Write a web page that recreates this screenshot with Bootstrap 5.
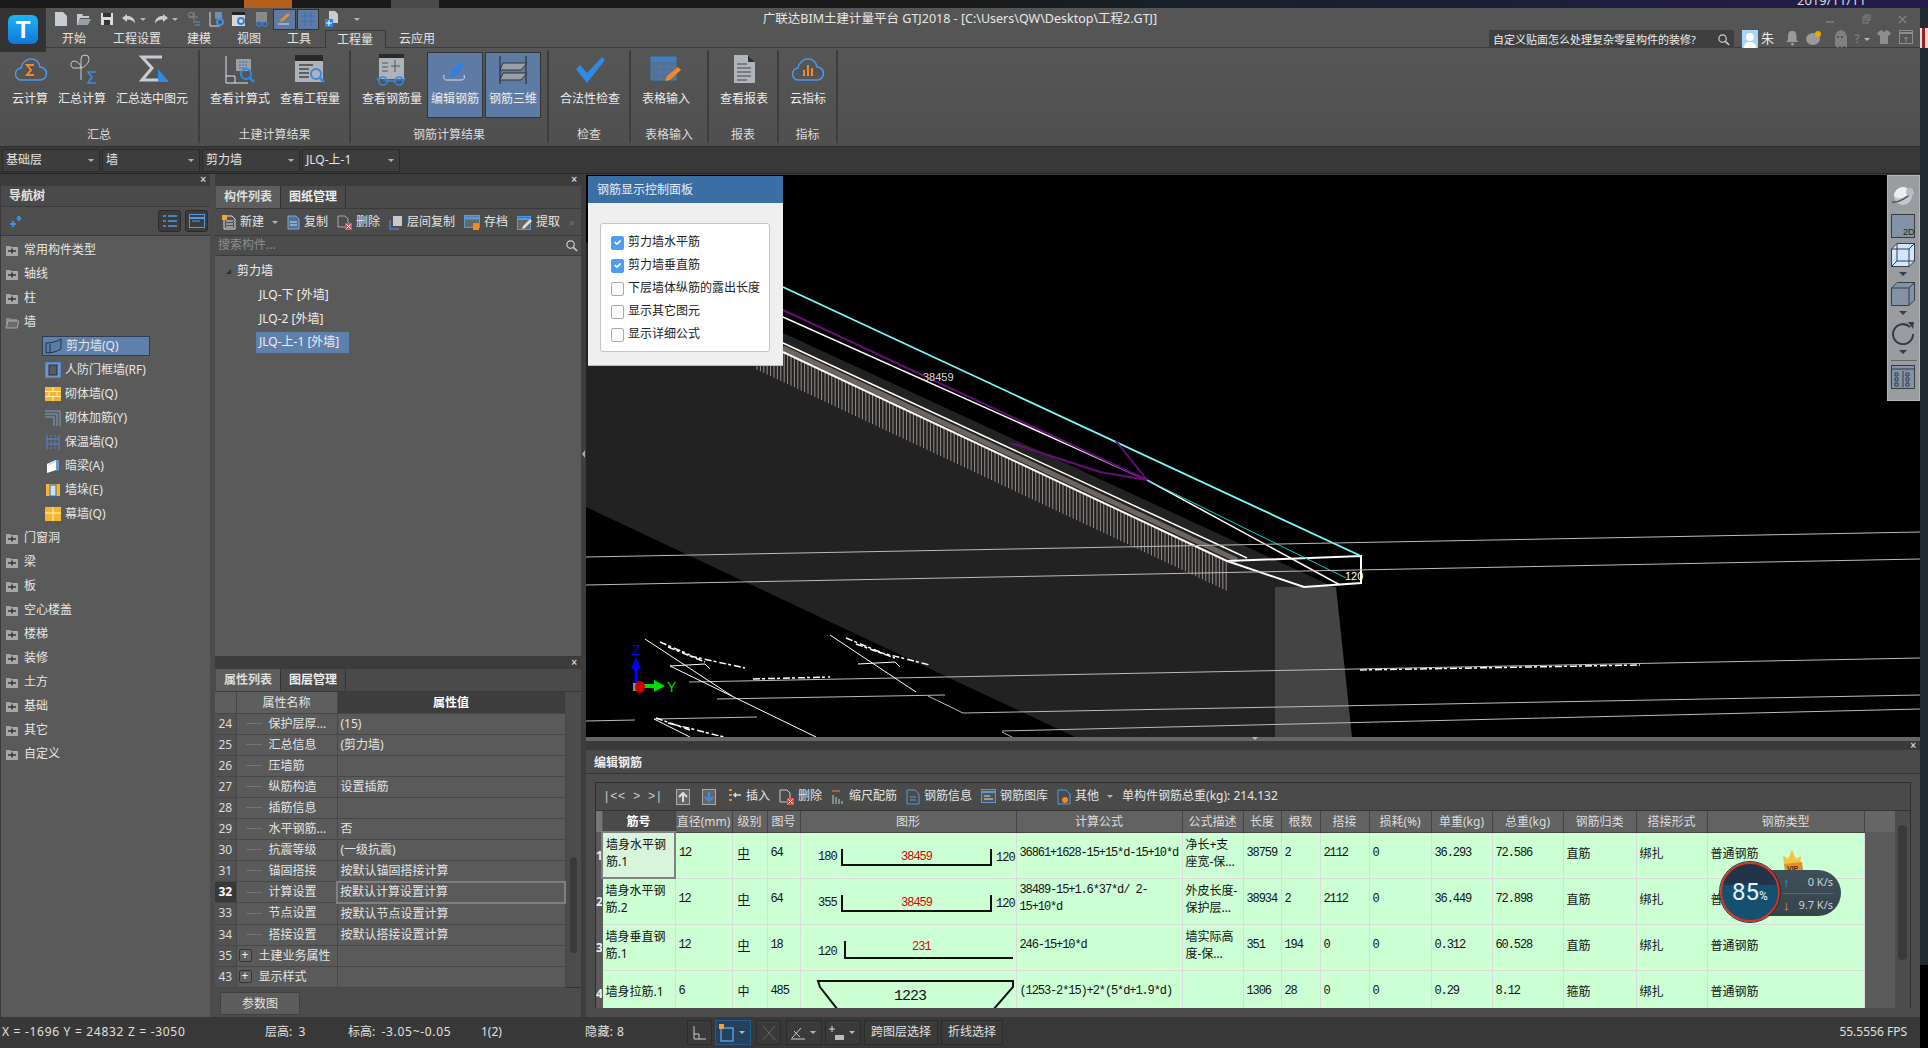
<!DOCTYPE html>
<html lang="zh-CN">
<head>
    <meta charset="UTF-8">
    <title>广联达BIM土建计量平台 GTJ2018</title>
    <link rel="stylesheet" href="https://cdn.jsdelivr.net/npm/bootstrap@5.3.0/dist/css/bootstrap.min.css">
    <style>
        html, body { height: 100%; }
        body { background: #1e2630; color: #e4e4e4; font: 12px/1.2 "Noto Sans", "Noto Sans CJK SC", sans-serif; overflow: hidden; width: 1928px; height: 1048px; }
        svg { display: block; flex: none; }

        /* desktop behind the window */
        .desk-top { height: 8px; background: linear-gradient(90deg, #1a1a1a 0, #1a1a1a 50%, #162028 60%, #251c4c 100%); position: relative; overflow: hidden; }
        .desk-seg1 { width: 48px; margin-left: 244px; background: #b5601c; }
        .desk-seg2 { width: 48px; margin-left: 99px; background: #4a4a4a; }
        .desk-clock { position: absolute; left: 1797px; top: -7px; font-size: 13px; color: #ddd; }
        .app-wrap { width: 1920px; height: 1040px; }
        .side-strip { width: 8px; height: 1040px; background: linear-gradient(#1f2a33 0, #1f2a33 92%, #000 92%); padding-top: 20px; }
        .side-pic { height: 20px; background: linear-gradient(90deg, #ddd 0, #ddd 30%, #a02020 30%, #a02020 60%, #ddd 60%); }

        /* title + tabs */
        .title-area { height: 40px; background: #555; border-bottom: 1px solid #3c3c3c; position: relative; }
        .logo-box { width: 46px; height: 44px; background: #333; position: absolute; left: 0; top: 0; z-index: 3; padding: 7px 0 0 8px; }
        .logo-t { width: 30px; height: 29px; border-radius: 6px; background: linear-gradient(#1fb4f5, #0d78dc); color: #fff; font: 700 24px/29px "Liberation Sans", sans-serif; text-align: center; }
        .row-top { height: 22px; }
        .qat { width: 360px; padding-left: 50px; }
        .qat-i { width: 23px; height: 22px; }
        .qat-on { background: #5e7ba6; width: 23px; height: 21px; border: 1px solid #333; margin-right: 1px; }
        .qat-c { width: 9px; }
        .qat-c2 { width: 11px; }
        .qat-end { margin-left: 11px; }
        .win-title { color: #e8e8e8; padding-top: 3px; font-size: 12.5px; }
        .win-btns { width: 360px; gap: 27px; padding: 0 13px 0 0; }
        .row-tabs { height: 18px; padding-left: 46px; }
        .rb-tab { padding: 0 13px; height: 18px; line-height: 17px; color: #e4e4e4; font-size: 12px; white-space: nowrap; }
        .rb-tab-first { padding-left: 16px; padding-right: 0; width: 54px; }
        .rb-tab-on { background: #555; border: 1px solid #3a3a3a; border-bottom: 0; width: 61px; padding: 0 11px; margin-left: 1px; }
        .q-box { width: 245px; height: 18px; background: #3f3f3f; padding: 0 4px; font-size: 11px; color: #eee; line-height: 19px; white-space: nowrap; overflow: hidden; }
        .tabs-right { margin-left: auto; padding-right: 3px; }
        .user-name { width: 23px; padding-left: 3px; color: #eee; font-size: 13px; }
        .tr-i { width: 22px; height: 18px; }

        /* ribbon */
        .ribbon { height: 99px; background: linear-gradient(#565656, #4f4f4f); border-bottom: 1px solid #2e2e2e; }
        .rb-group { height: 93px; margin-top: 2px; border-right: 2px solid #3d3d3d; position: relative; }
        .rb-g1 { width: 200px; padding-left: 7px; }
        .rb-g2 { width: 151px; padding-left: 5px; }
        .rb-g3 { width: 198px; padding-left: 6px; }
        .rb-g4 { width: 82px; padding-left: 6px; }
        .rb-g5 { width: 78px; padding-left: 6px; }
        .rb-g6 { width: 70px; padding-left: 6px; }
        .rb-g7 { width: 59px; padding-left: 6px; }
        .rb-btn { height: 66px; padding: 4px 5px 0; font-size: 12px; color: #ececec; white-space: nowrap; text-align: center; }
        .rb-btn svg { margin: 0 auto 6px; }
        .rb-btn-on { background: #5e7ba6; border: 1px solid #333; width: 56px; padding: 1px 3px 0; margin: 2px 2px 0 0; }
        .rb-grp-name { position: absolute; left: 0; right: 0; bottom: 1px; text-align: center; font-size: 12px; color: #dcdcdc; }

        .pick-bar { height: 27px; background: #383838; border-bottom: 1px solid #262626; padding: 2px 0 0 2px; gap: 2px; }
        .pick-box { width: 98px; height: 23px; background: #3d3d3d; border: 1px solid #2b2b2b; padding: 0 5px 0 3px; font-size: 12px; color: #e4e4e4; }
        .caret-s { width: 0; height: 0; border-left: 3px solid transparent; border-right: 3px solid transparent; border-top: 3px solid #b5b5b5; flex: none; }

        /* panels */
        .work-area { height: 843px; }
        .pane-left { width: 210px; background: #5a5a5a; border-left: 1px solid #3a3a3a; }
        .pane-strip { height: 12px; background: #3c3c3c; color: #ccc; font: 700 10px/12px "Liberation Sans", sans-serif; text-align: right; padding-right: 4px; }
        .nav-head { height: 21px; background: #4a4a4a; border-bottom: 1px solid #3a3a3a; padding: 3px 8px; font-weight: 700; font-size: 12px; }
        .nav-tools { height: 29px; background: #4d4d4d; border-bottom: 1px solid #3a3a3a; padding: 3px 2px 3px 8px; gap: 4px; }
        .nav-tbtn { width: 23px; height: 22px; background: #3c3c3c; border: 1px solid #2b2b2b; border-radius: 3px; }
        .nav-tree { padding-top: 2px; }
        .nav-row { height: 24px; padding-left: 4px; gap: 5px; font-size: 12px; color: #e6e6e6; }
        .nav-sub { padding-left: 44px; gap: 4px; }
        .nav-sel { background: #6080ac; border: 1px solid #2e3b52; height: 20px; margin: 2px 60px 2px 41px; padding-left: 2px; }
        .pane-gap { width: 5px; background: #4b4b4b; }
        .pane-mid { width: 366px; background: #5a5a5a; }
        .pane-gap2 { width: 5px; background: #3d3d3d; position: relative; }
        .gap-arrow { position: absolute; left: 1px; top: 276px; width: 0; height: 0; border-top: 4px solid transparent; border-bottom: 4px solid transparent; border-right: 3px solid #aaa; }

        .pane-tabs { height: 23px; background: #4a4a4a; padding-left: 1px; border-bottom: 1px solid #3a3a3a; }
        .pane-tab { width: 65px; text-align: center; line-height: 22px; font-size: 12px; font-weight: 700; color: #eee; border-right: 1px solid #333; }
        .pane-tab-on { background: #5e5e5e; color: #ddd; }
        .comp-tools { height: 27px; background: #4c4c4c; padding-left: 7px; border-bottom: 1px solid #3a3a3a; font-size: 12px; }
        .ct-item { gap: 4px; margin-right: 9px; white-space: nowrap; }
        .comp-search { height: 20px; background: #4c4c4c; border-bottom: 1px solid #3a3a3a; color: #8d8d8d; padding: 0 3px; margin-bottom: 1px; }
        .comp-list { height: 400px; background: #5a5a5a; padding-top: 2px; border-bottom: 1px solid #3a3a3a; }
        .cl-row { height: 24px; padding-left: 44px; font-size: 12px; color: #eee; }
        .cl-root { padding-left: 11px; gap: 6px; }
        .cl-sel { background: #6080ac; width: 93px; height: 21px; margin: 1px 0 2px 41px; padding-left: 3px; white-space: nowrap; }
        .cl-tri { width: 0; height: 0; border-left: 5px solid transparent; border-bottom: 5px solid #2e2e2e; }

        .prop-pane { height: 359px; background: #4c4c4c; }
        .prop-wrap { height: 295px; }
        .prop-scroll { width: 16px; background: #4c4c4c; padding: 165px 4px 0 4px; }
        .scroll-thumb { background: #3a3a3a; border-radius: 4px; height: 96px; }
        .table.prop-tbl { table-layout: fixed; width: 350px; margin: 0; border-color: #454545; }
        .table.prop-tbl > * > tr > * { background-color: #5a5a5a; color: #e4e4e4; padding: 0; height: 21px; line-height: 20px; font-size: 12px; border: 1px solid #474747; border-width: 0 1px 1px 0; white-space: nowrap; overflow: hidden; box-shadow: none; font-weight: 400; }
        .table.prop-tbl > thead > tr > th { text-align: center; background-color: #5e5e5e; }
        .table.prop-tbl > thead > tr > th.prop-hv { background-color: #3d3d3d; font-weight: 700; color: #fff; }
        .table.prop-tbl > tbody > tr > td.prop-no { background-color: #525252; text-align: center; color: #ddd; }
        .table.prop-tbl > tbody > tr > td.prop-no-on { background-color: #383838; font-weight: 700; color: #fff; }
        .table.prop-tbl > tbody > tr > td.prop-v { padding-left: 3px; }
        .table.prop-tbl > tbody > tr > td.prop-focus { border: 2px solid #808080; padding-left: 2px; line-height: 17px; }
        .prop-name { padding-left: 9px; gap: 7px; height: 20px; }
        .tree-tick { width: 16px; height: 1px; background: #757575; flex: none; }
        .plus-box { width: 13px; height: 13px; border: 1px solid #333; border-radius: 2px; background: #626262; text-align: center; line-height: 10px; font-size: 12px; color: #eee; flex: none; margin-left: 2px; }
        .prop-foot { height: 29px; padding: 4px 0 0 5px; border-top: 1px solid #333; }
        .param-btn { width: 80px; height: 23px; background: #5c5c5c; border: 1px solid #404040; color: #e4e4e4; text-align: center; line-height: 21px; font-size: 12px; }

        /* 3D canvas */
        .pane-right { width: 1334px; background: #3d3d3d; position: relative; }
        .scene-box { height: 562px; background: #000; position: relative; overflow: hidden; margin-top: 1px; }
        .scene-svg { position: absolute; left: 0; top: 0; }
        .ctl-panel { position: absolute; left: 2px; top: 1px; width: 195px; height: 190px; background: #efefef; z-index: 2; border-bottom: 1px solid #bbb; }
        .ctl-head { height: 27px; background: #3a6ea5; color: #e8eef6; padding: 0 9px; line-height: 27px; font-size: 12px; }
        .ctl-inner { margin: 20px 13px 0 12px; height: 129px; background: #fff; border: 1px solid #c4c4c4; border-radius: 3px; padding: 7px 10px 0; color: #222; }
        .ctl-row { height: 23px; gap: 4px; font-size: 12px; white-space: nowrap; }
        .form-check-input.ctl-chk { width: 13px; height: 14px; margin: 0; border-radius: 2px; border-color: #aaa; flex: none; }
        .form-check-input.ctl-chk:checked { background-color: #4d9df5; border-color: #4d9df5; }
        .view-bar { position: absolute; right: 0; top: 0; width: 33px; height: 226px; background: #9a9ca0; border: 1px solid #b5b5b5; z-index: 2; padding: 9px 0 0 3px; }
        .view-bar svg { margin-bottom: 5px; }
        .view-bar svg.vb-first { margin-bottom: 7px; }
        .vb-tri { width: 0; height: 0; border-left: 4px solid transparent; border-right: 4px solid transparent; border-top: 4px solid #333c48; margin: 0 0 6px 8px; }
        .vb-line { height: 1px; background: #666; width: 26px; margin: 0 0 4px; }
        .scene-sash { height: 4px; background: #666; position: relative; }
        .sash-tri { position: absolute; left: 666px; top: 0; width: 0; height: 0; border-left: 3px solid transparent; border-right: 3px solid transparent; border-top: 3px solid #bbb; }

        /* editor */
        .edit-strip { height: 9px; background: #3a3a3a; color: #ccc; font: 700 10px/9px "Liberation Sans", sans-serif; text-align: right; padding-right: 4px; }
        .edit-head { height: 24px; background: #4a4a4a; border-bottom: 1px solid #353535; padding: 6px 8px 0; font-weight: 700; color: #eee; }
        .edit-body { height: 243px; background: #4c4c4c; padding: 8px 9px 9px; position: relative; }
        .edit-box { height: 226px; border: 1px solid #2e2e2e; background: #4c4c4c; }
        .edit-tools { height: 28px; padding-left: 7px; border-bottom: 1px solid #333; background: #4a4a4a; font-size: 12px; white-space: nowrap; }
        .et-nav { width: 15px; font: 12px "Liberation Mono", monospace; color: #ccc; }
        .et-nav-end { margin-right: 13px; }
        .et-arrow { margin-right: 12px; }
        .et-item { gap: 4px; margin-right: 9px; }
        .grid-row { height: 197px; overflow: hidden; }
        .grid-clip { width: 1300px; height: 197px; overflow: hidden; }
        .grid-scroll { width: 15px; background: #4c4c4c; padding: 14px 3px 0; }
        .grid-thumb { background: #3a3a3a; height: 135px; border-radius: 4px; }
        .table.rebar-tbl { table-layout: fixed; width: 1300px; margin: 0; }
        .table.rebar-tbl > * > tr > * { padding: 0 3px; border: 1px solid #d9dcd9; border-width: 0 1px 1px 0; vertical-align: middle; font-size: 12px; line-height: 17px; box-shadow: none; overflow: hidden; }
        .table.rebar-tbl > tbody > tr > td { background-color: #ccffd4; color: #111; height: 46px; padding-bottom: 4px; }
        .table.rebar-tbl > thead > tr > th { background-color: #626262; color: #ddd; height: 21px; text-align: center; font-weight: 400; border-color: #454545; border-width: 0 1px 1px 0; padding: 0; white-space: nowrap; }
        .table.rebar-tbl > thead > tr > th.grid-key { font-weight: 700; color: #fff; background-color: #4a4a4a; }
        .table.rebar-tbl > * > tr > .grid-no { background-color: #5a5a5a; color: #eee; padding: 0; border-color: #5a5a5a; font-weight: 700; }
        .table.rebar-tbl > thead > tr > .grid-no { background-color: #777; }
        .table.rebar-tbl > * > tr > .grid-fill { background-color: #5a5a5a; border: 0; }
        .table.rebar-tbl > thead > tr > .grid-fill { background-color: #666; }
        .table.rebar-tbl > tbody > tr > td.grid-pic { padding: 0; }
        .grid-pic svg { margin-bottom: -3px; }
        .table.rebar-tbl > tbody > tr > td.grid-focus { border: 2px solid #808080; background-color: #d8f4dc; }
        .table.rebar-tbl > tbody > tr > td.grid-num { font: 12px/17px "Liberation Mono", "Noto Sans CJK SC", monospace; letter-spacing: -1.1px; }
        .grade-u { border-bottom: 1px solid #111; line-height: 10px; display: inline-block; margin-left: 2px; }
        .grade-n { display: inline-block; margin-left: 2px; }
        .shape-t { font: 12px "Liberation Mono", monospace; letter-spacing: -1px; }

        /* net speed float */
        .net-float { position: absolute; left: 1134px; top: 75px; width: 122px; height: 74px; z-index: 5; }
        .net-pill { position: absolute; left: 30px; top: 21px; width: 91px; height: 46px; border-radius: 0 23px 23px 0; background: linear-gradient(#3f4f5a, #36434c); color: #c8d2d8; padding: 1px 8px 0 33px; font: 11px/22px "Noto Sans", sans-serif; text-align: right; }
        .net-line { height: 22px; }
        .net-line + .net-line { border-top: 1px solid #5a6972; }
        .net-up { color: #1ea7ff; font-weight: 700; font-size: 13px; }
        .net-down { color: #f59a23; font-weight: 700; font-size: 13px; }
        .net-ball { position: absolute; left: 0; top: 13px; width: 60px; height: 60px; border-radius: 50%; border: 2px solid #d9331f; outline: 1px solid #2a3238; background: linear-gradient(#22334a 0, #22334a 38%, #155070 38%, #155070 100%); color: #e8f2f6; text-align: center; font: 24px/56px "Roboto", sans-serif; }
        .net-ball small { font-size: 12px; }
        .net-crown { position: absolute; left: 62px; top: 0; }

        /* status */
        .status-bar { height: 31px; background: #383838; color: #e0e0e0; font-size: 12px; white-space: nowrap; position: relative; }
        .st-coord { width: 265px; padding-left: 2px; letter-spacing: .7px; }
        .st-a { width: 83px; }
        .st-b { width: 133px; }
        .st-num { letter-spacing: .7px; }
        .st-c { width: 104px; }
        .st-d { width: 102px; letter-spacing: .4px; }
        .st-btn { height: 25px; border: 1px solid #2c2c2c; margin-right: 3px; padding: 0 6px; background: #3a3a3a; }
        .st-on { border-color: #1f5d92; background: #27415c; padding: 0 3px; }
        .st-w25 { width: 25px; padding: 0 5px; }
        .st-w36 { width: 36px; padding: 0 3px; }
        .st-tight { margin-left: 2px; }
        .st-fps { position: absolute; right: 13px; top: 8px; }
    </style>
</head>
<body>
<svg width="0" height="0" class="position-absolute">
    <defs>
        <symbol id="ic-folder" viewBox="0 0 14 14"><path d="M1 3h4l1 1h7v9H1z" fill="#a8a8a8"/><path d="M3 8h8M7 5.500v5" stroke="#333" stroke-width="1.600"/></symbol>
        <symbol id="ic-open" viewBox="0 0 14 14"><path d="M1 3h4l1 1h6v2H4l-1 7H1z" fill="#8a8a8a"/><path d="M3 6h11l-2 7H1z" fill="#6c6c6c" stroke="#a8a8a8"/></symbol>
        <symbol id="ic-search" viewBox="0 0 14 14"><circle cx="6" cy="6" r="4" fill="none" stroke="#d0d0d0" stroke-width="1.300"/><path d="M9 9l4 4" stroke="#d0d0d0" stroke-width="1.600"/></symbol>
        <symbol id="ic-close" viewBox="0 0 10 10"><path d="M1 1l8 8M9 1l-8 8" stroke="#8a8a8a" stroke-width="1.200"/></symbol>
    </defs>
</svg>

<div class="desk-top d-flex">
    <div class="desk-seg1"></div>
    <div class="desk-seg2"></div>
    <div class="desk-clock">2019/11/11</div>
</div>

<div class="d-flex">
<div class="app-wrap d-flex flex-column">

    <!-- title bar and tabs -->
    <div class="title-area">
        <div class="logo-box"><div class="logo-t">T</div></div>
        <div class="row-top d-flex">
            <div class="qat d-flex align-items-center">
                <div class="qat-i d-flex align-items-center justify-content-center"><svg width="14" height="16" viewBox="0 0 14 16"><path d="M1 1h8l4 4v10H1z" fill="#c8cdd4"/></svg></div>
                <div class="qat-i d-flex align-items-center justify-content-center"><svg width="16" height="14" viewBox="0 0 16 14"><path d="M1 2h5l1 2h6v2H4L2 13H1z" fill="#c8cdd4"/><path d="M4 7h11l-3 6H2z" fill="#9aa0a8"/></svg></div>
                <div class="qat-i d-flex align-items-center justify-content-center"><svg width="14" height="14" viewBox="0 0 14 14"><path d="M1 1h12v12H1z" fill="#d8dce0"/><path d="M3 1h8v4H3zM4 8h6v5H4z" fill="#333"/></svg></div>
                <div class="qat-i d-flex align-items-center justify-content-center"><svg width="16" height="12" viewBox="0 0 16 12"><path d="M6 1L1 5l5 4V6.500c4 0 6 1 8 4 0-5-3-7.500-8-7.500z" fill="#c8cdd4"/></svg></div>
                <div class="qat-c"><div class="caret-s"></div></div>
                <div class="qat-i d-flex align-items-center justify-content-center"><svg width="16" height="12" viewBox="0 0 16 12"><path d="M10 1l5 4-5 4V6.500c-4 0-6 1-8 4 0-5 3-7.500 8-7.500z" fill="#c8cdd4"/></svg></div>
                <div class="qat-c2"><div class="caret-s"></div></div>
                <div class="qat-i d-flex align-items-center justify-content-center"><svg width="14" height="16" viewBox="0 0 14 16"><path d="M7 1v11M2 6h9" stroke="#888" fill="none"/><circle cx="4" cy="4" r="2.500" fill="none" stroke="#888"/><path d="M8 11h5M8 14h5" stroke="#4a9be8"/></svg></div>
                <div class="qat-i d-flex align-items-center justify-content-center"><svg width="16" height="16" viewBox="0 0 16 16"><path d="M1 1v14h10" stroke="#ddd" fill="none"/><rect x="6" y="1" width="7" height="7" fill="#6f8fb8"/><circle cx="11" cy="11" r="3" fill="none" stroke="#3d8fe0" stroke-width="2"/></svg></div>
                <div class="qat-i d-flex align-items-center justify-content-center"><svg width="16" height="16" viewBox="0 0 16 16"><rect x="1" y="1" width="13" height="14" fill="#d6d6d6"/><rect x="1" y="1" width="13" height="3" fill="#222"/><circle cx="10" cy="10" r="3" fill="none" stroke="#2f83d8" stroke-width="2"/></svg></div>
                <div class="qat-i d-flex align-items-center justify-content-center"><svg width="16" height="16" viewBox="0 0 16 16"><rect x="2" y="1" width="11" height="10" fill="#8a8a8a"/><circle cx="5" cy="13" r="2.200" fill="none" stroke="#2f83d8" stroke-width="1.300"/><circle cx="11" cy="13" r="2.200" fill="none" stroke="#2f83d8" stroke-width="1.300"/></svg></div>
                <div class="qat-on d-flex align-items-center justify-content-center"><svg width="14" height="14" viewBox="0 0 14 14"><path d="M11 1l2 2-7 6-3 1 1-3z" fill="#f08a24"/><path d="M1 12h11" stroke="#ddd"/></svg></div>
                <div class="qat-on d-flex align-items-center justify-content-center"><svg width="16" height="16" viewBox="0 0 16 16"><path d="M1 5h14M1 10h14M5 1v14M11 1v14" stroke="#3c6fb5" fill="none"/></svg></div>
                <div class="qat-i d-flex align-items-center justify-content-center"><svg width="16" height="18" viewBox="0 0 16 18"><path d="M5 1h6l3 3v9H5z" fill="#c8cdd4"/><rect x="1" y="9" width="8" height="8" fill="#2f83d8"/><path d="M5 10v6M2 13h6" stroke="#fff"/></svg></div>
                <div class="qat-end"><div class="caret-s"></div></div>
            </div>
            <div class="win-title flex-grow-1 text-center">广联达BIM土建计量平台 GTJ2018 - [C:\Users\QW\Desktop\工程2.GTJ]</div>
            <div class="win-btns d-flex align-items-center justify-content-end">
                <svg width="9" height="9" viewBox="0 0 9 9"><path d="M0 7h8" stroke="#777" stroke-width="2"/></svg>
                <svg width="9" height="10" viewBox="0 0 9 10"><path d="M3 1h5v5H3zM1 3h5v6H1z" fill="none" stroke="#777" stroke-width="1.300"/></svg>
                <svg width="9" height="9" viewBox="0 0 10 10"><use href="#ic-close"/></svg>
            </div>
        </div>
        <div class="row-tabs d-flex">
            <div class="rb-tab rb-tab-first">开始</div>
            <div class="rb-tab">工程设置</div>
            <div class="rb-tab">建模</div>
            <div class="rb-tab">视图</div>
            <div class="rb-tab">工具</div>
            <div class="rb-tab rb-tab-on">工程量</div>
            <div class="rb-tab">云应用</div>
            <div class="tabs-right d-flex align-items-center">
                <div class="q-box d-flex align-items-center justify-content-between">
                    <span>自定义贴面怎么处理复杂零星构件的装修?</span>
                    <svg width="13" height="13"><use href="#ic-search"/></svg>
                </div>
                <svg class="ms-2" width="16" height="18" viewBox="0 0 16 18"><rect width="16" height="18" fill="#a9d4f5"/><circle cx="8" cy="7" r="4" fill="#fff"/><path d="M2 18c0-5 3-6 6-6s6 1 6 6z" fill="#fff"/></svg>
                <div class="user-name">朱</div>
                <div class="tr-i d-flex justify-content-center"><svg width="13" height="16" viewBox="0 0 13 16"><path d="M6.500 1c3 0 4 2 4 5v4l2 2H0l2-2V6c0-3 1-5 4.500-5z" fill="#9a9a9a"/><circle cx="6.500" cy="14" r="1.500" fill="#9a9a9a"/></svg></div>
                <div class="tr-i d-flex justify-content-center"><svg width="16" height="16" viewBox="0 0 16 16"><ellipse cx="7" cy="9" rx="7" ry="6" fill="#9a9a9a"/><circle cx="12" cy="4" r="3" fill="#f0a800"/></svg></div>
                <div class="tr-i d-flex justify-content-center ms-1"><svg width="14" height="18" viewBox="0 0 14 18"><path d="M7 0c4 0 7 3 7 8v10l-3-2-2 2-2-2-2 2-3-2V8c0-5 3-8 7-8z" fill="#808080"/><circle cx="5" cy="7" r="1" fill="#444"/><circle cx="9" cy="7" r="1" fill="#444"/></svg></div>
                <div class="tr-i d-flex justify-content-center align-items-center"><span class="fw-bold text-secondary">?</span><span class="caret-s ms-1"></span></div>
                <div class="tr-i d-flex justify-content-center"><svg width="14" height="14" viewBox="0 0 14 14"><path d="M4 0l3 2 3-2 4 3-2 3-1-1v9H3V5L2 6 0 3z" fill="#8d8d8d"/></svg></div>
                <div class="tr-i d-flex justify-content-center"><svg width="14" height="14" viewBox="0 0 14 14"><rect x=".5" y=".5" width="13" height="13" fill="none" stroke="#8d8d8d"/><path d="M1 3h12" stroke="#8d8d8d" stroke-width="2"/><path d="M7 12V7M5 9l2-2 2 2" stroke="#8d8d8d" fill="none"/></svg></div>
            </div>
        </div>
    </div>

    <!-- ribbon -->
    <div class="ribbon d-flex">
        <div class="rb-group rb-g1 d-flex">
            <div class="rb-btn"><svg width="36" height="32" viewBox="0 0 36 32"><path d="M10 26a6 6 0 0 1-1-12c1-6 6-9 10-9 5 0 8 3 9 8a6.500 6.500 0 0 1 0 13z" fill="none" stroke="#4a9be8" stroke-width="1.500"/><path d="M22 11h-7l4 5-4 5h7" fill="none" stroke="#f08a30" stroke-width="2"/></svg>云计算</div>
            <div class="rb-btn"><svg width="36" height="32" viewBox="0 0 36 32"><path d="M17 14V5a4 4 0 0 1 8 0c0 4-4 8-8 9H9a4 4 0 0 1 0-7c4 0 8 3 8 7v12" fill="none" stroke="#c8cdd4"/><path d="M32 18h-8l4 5-4 6h8" fill="none" stroke="#3d8fe0" stroke-width="1.600"/></svg>汇总计算</div>
            <div class="rb-btn"><svg width="36" height="32" viewBox="0 0 36 32"><path d="M28 3H8l10 11L8 26h20" fill="none" stroke="#c8cdd4" stroke-width="3"/><path d="M24 15l11 13H24z" fill="#2f8be6"/></svg>汇总选中图元</div>
            <div class="rb-grp-name">汇总</div>
        </div>
        <div class="rb-group rb-g2 d-flex">
            <div class="rb-btn"><svg width="60" height="32" viewBox="0 0 60 32"><path d="M16 2v27h22M16 22h9v7" fill="none" stroke="#dfe3e8"/><rect x="26" y="5" width="15" height="12" fill="#9aa0a8"/><path d="M29 8h9M29 11h9M29 14h9" stroke="#3a6ea5" stroke-dasharray="2 1"/><circle cx="36" cy="20" r="5" fill="none" stroke="#2f8be6" stroke-width="2"/><path d="M40 24l4 4" stroke="#2f8be6" stroke-width="2.500"/></svg>查看计算式</div>
            <div class="rb-btn"><svg width="60" height="32" viewBox="0 0 60 32"><rect x="15" y="1" width="28" height="27" fill="#aeb3ba"/><rect x="15" y="1" width="28" height="6" fill="#2a2a2a"/><path d="M19 11h14M19 15h10M19 19h10M19 23h10" stroke="#444" stroke-width="1.500"/><circle cx="36" cy="20" r="5" fill="#aeb3ba" stroke="#2f8be6" stroke-width="2"/><path d="M40 24l4 4" stroke="#2f8be6" stroke-width="2.500"/></svg>查看工程量</div>
            <div class="rb-grp-name">土建计算结果</div>
        </div>
        <div class="rb-group rb-g3 d-flex">
            <div class="rb-btn"><svg width="60" height="32" viewBox="0 0 60 32"><rect x="17" y="0" width="25" height="25" fill="#aeb3ba"/><rect x="17" y="0" width="25" height="4" fill="#2a2a2a"/><path d="M20 9h6M20 13h6M20 17h6M33 6v12M29 12h9" stroke="#555"/><path d="M21 26h6M33 26h6" stroke="#2f8be6"/><circle cx="21" cy="27" r="4" fill="none" stroke="#2f8be6" stroke-width="1.600"/><circle cx="37" cy="27" r="4" fill="none" stroke="#2f8be6" stroke-width="1.600"/><path d="M25 27h8M17 27l-2-3M41 27l2-3" stroke="#2f8be6" stroke-width="1.600"/></svg>查看钢筋量</div>
            <div class="rb-btn rb-btn-on"><svg width="48" height="32" viewBox="0 0 48 32"><path d="M29 8l4 4-9 10-5 1 1-5z" fill="#2f80e0"/><path d="M13 21c-1 4 1 5 3 5h14c3 0 4-2 3-5" fill="none" stroke="#dfe3e8"/></svg>编辑钢筋</div>
            <div class="rb-btn rb-btn-on"><svg width="48" height="32" viewBox="0 0 48 32"><path d="M11 2v28M37 2v28" stroke="#222"/><path d="M14 9h24l-6 7H11zM14 19h24l-6 7H11z" fill="#9a9ea5" stroke="#333"/></svg>钢筋三维</div>
            <div class="rb-grp-name">钢筋计算结果</div>
        </div>
        <div class="rb-group rb-g4 d-flex">
            <div class="rb-btn"><svg width="60" height="32" viewBox="0 0 60 32"><path d="M16 15l4-4 7 8L42 3l3 3-18 23z" fill="#2f8be6"/></svg>合法性检查</div>
            <div class="rb-grp-name">检查</div>
        </div>
        <div class="rb-group rb-g5 d-flex">
            <div class="rb-btn"><svg width="48" height="32" viewBox="0 0 48 32"><rect x="9" y="3" width="25" height="23" fill="#5a6f8a" stroke="#3f7fc6"/><rect x="9" y="3" width="25" height="5" fill="#3f7fc6"/><path d="M9 13h25M9 19h25M17 8v18M25 8v18" stroke="#3f7fc6"/><path d="M36 13l3 3-11 10-5 1 2-5z" fill="#f08a24"/></svg>表格输入</div>
            <div class="rb-grp-name">表格输入</div>
        </div>
        <div class="rb-group rb-g6 d-flex">
            <div class="rb-btn"><svg width="48" height="32" viewBox="0 0 48 32"><path d="M14 1h14l7 7v21H14z" fill="#b0b5bc"/><path d="M28 1l7 7h-7z" fill="#333"/><path d="M17 10h10M17 14h14M17 18h14M17 22h14M17 26h10" stroke="#444"/></svg>查看报表</div>
            <div class="rb-grp-name">报表</div>
        </div>
        <div class="rb-group rb-g7 d-flex">
            <div class="rb-btn"><svg width="36" height="32" viewBox="0 0 36 32"><path d="M9 26a6 6 0 0 1-1-12c1-6 6-9 10-9 5 0 8 3 9 8a6.500 6.500 0 0 1 0 13z" fill="none" stroke="#4a9be8" stroke-width="1.500"/><path d="M14 16v6M18 11v11M22 14v8" stroke="#f08a30" stroke-width="2"/></svg>云指标</div>
            <div class="rb-grp-name">指标</div>
        </div>
    </div>

    <div class="pick-bar d-flex">
        <div class="pick-box d-flex align-items-center justify-content-between">基础层<span class="caret-s"></span></div>
        <div class="pick-box d-flex align-items-center justify-content-between">墙<span class="caret-s"></span></div>
        <div class="pick-box d-flex align-items-center justify-content-between">剪力墙<span class="caret-s"></span></div>
        <div class="pick-box d-flex align-items-center justify-content-between">JLQ-上-1<span class="caret-s"></span></div>
    </div>

    <div class="work-area d-flex">
        <!-- navigation tree -->
        <div class="pane-left">
            <div class="pane-strip">×</div>
            <div class="nav-head">导航树</div>
            <div class="nav-tools d-flex align-items-center">
                <svg class="me-auto" width="14" height="14" viewBox="0 0 14 14"><path d="M4 7v6M1 10h6M10 2v5M7.500 4.500h5" stroke="#3d8fe0" stroke-width="2.200"/></svg>
                <div class="nav-tbtn d-flex align-items-center justify-content-center"><svg width="14" height="14" viewBox="0 0 14 14"><path d="M0 2h3M5 2h9M0 7h3M5 7h9M0 12h3M5 12h9" stroke="#4f9be6" stroke-width="1.300"/></svg></div>
                <div class="nav-tbtn d-flex align-items-center justify-content-center"><svg width="16" height="14" viewBox="0 0 16 14"><rect x=".5" y=".5" width="15" height="13" fill="none" stroke="#4f9be6"/><path d="M1 4h14" stroke="#4f9be6" stroke-width="2"/><path d="M3 7h8" stroke="#4f9be6"/></svg></div>
            </div>
            <div class="nav-tree">
                <div class="nav-row d-flex align-items-center"><svg width="14" height="14"><use href="#ic-folder"/></svg>常用构件类型</div>
                <div class="nav-row d-flex align-items-center"><svg width="14" height="14"><use href="#ic-folder"/></svg>轴线</div>
                <div class="nav-row d-flex align-items-center"><svg width="14" height="14"><use href="#ic-folder"/></svg>柱</div>
                <div class="nav-row d-flex align-items-center"><svg width="14" height="14"><use href="#ic-open"/></svg>墙</div>
                <div class="nav-row nav-sub nav-sel d-flex align-items-center"><svg width="17" height="16" viewBox="0 0 17 16"><path d="M1 5c5 0 10-1 15-4v10c-5 3-10 4-15 4z" fill="#5d7ca3" stroke="#1f3048"/><path d="M5 15V6" stroke="#1f3048"/></svg>剪力墙(Q)</div>
                <div class="nav-row nav-sub d-flex align-items-center"><svg width="16" height="16" viewBox="0 0 16 16"><rect x=".5" y=".5" width="15" height="15" fill="#6f94c6" stroke="#4f86d0"/><rect x="4" y="3" width="8" height="10" fill="#5a5a5a" stroke="#234"/></svg>人防门框墙(RF)</div>
                <div class="nav-row nav-sub d-flex align-items-center"><svg width="16" height="14" viewBox="0 0 16 14"><rect width="16" height="14" fill="#f5b731"/><path d="M0 4.500h16M0 9.500h16M8 0v4.500M4 4.500v5M12 4.500v5M8 9.500V14" stroke="#fff2c0"/></svg>砌体墙(Q)</div>
                <div class="nav-row nav-sub d-flex align-items-center"><svg width="16" height="16" viewBox="0 0 16 16"><path d="M0 1h15v15M0 4h12v12M0 7h9v9" fill="none" stroke="#7f9fc8"/></svg>砌体加筋(Y)</div>
                <div class="nav-row nav-sub d-flex align-items-center"><svg width="16" height="16" viewBox="0 0 16 16"><path d="M2 1v15M14 1v15" stroke="#4f86d0"/><path d="M6 1v15M10 1v15" stroke="#4f86d0" stroke-dasharray="2 1"/><path d="M2 5h12M2 10h12" stroke="#4f86d0"/></svg>保温墙(Q)</div>
                <div class="nav-row nav-sub d-flex align-items-center"><svg width="16" height="16" viewBox="0 0 16 16"><path d="M2 6l9-4v10l-9 3z" fill="#fff"/><path d="M2 6l9-4 3 1-9 4z" fill="#cfe0f5"/><path d="M11 2l3 1v9l-3 1z" fill="#6f94c6"/></svg>暗梁(A)</div>
                <div class="nav-row nav-sub d-flex align-items-center"><svg width="16" height="14" viewBox="0 0 16 14"><rect x="1" y="1" width="14" height="12" fill="#f5b731"/><rect x="5" y="2" width="6" height="11" fill="#cfe0f5" stroke="#2f6fb5"/></svg>墙垛(E)</div>
                <div class="nav-row nav-sub d-flex align-items-center"><svg width="16" height="14" viewBox="0 0 16 14"><rect width="16" height="14" fill="#f5b731"/><path d="M8 0v14M0 6h16" stroke="#fff2c0"/></svg>幕墙(Q)</div>
                <div class="nav-row d-flex align-items-center"><svg width="14" height="14"><use href="#ic-folder"/></svg>门窗洞</div>
                <div class="nav-row d-flex align-items-center"><svg width="14" height="14"><use href="#ic-folder"/></svg>梁</div>
                <div class="nav-row d-flex align-items-center"><svg width="14" height="14"><use href="#ic-folder"/></svg>板</div>
                <div class="nav-row d-flex align-items-center"><svg width="14" height="14"><use href="#ic-folder"/></svg>空心楼盖</div>
                <div class="nav-row d-flex align-items-center"><svg width="14" height="14"><use href="#ic-folder"/></svg>楼梯</div>
                <div class="nav-row d-flex align-items-center"><svg width="14" height="14"><use href="#ic-folder"/></svg>装修</div>
                <div class="nav-row d-flex align-items-center"><svg width="14" height="14"><use href="#ic-folder"/></svg>土方</div>
                <div class="nav-row d-flex align-items-center"><svg width="14" height="14"><use href="#ic-folder"/></svg>基础</div>
                <div class="nav-row d-flex align-items-center"><svg width="14" height="14"><use href="#ic-folder"/></svg>其它</div>
                <div class="nav-row d-flex align-items-center"><svg width="14" height="14"><use href="#ic-folder"/></svg>自定义</div>
            </div>
        </div>
        <div class="pane-gap"></div>

        <!-- component list + properties -->
        <div class="pane-mid">
            <div class="pane-strip">×</div>
            <div class="pane-tabs d-flex">
                <div class="pane-tab pane-tab-on">构件列表</div>
                <div class="pane-tab">图纸管理</div>
            </div>
            <div class="comp-tools d-flex align-items-center">
                <div class="ct-item d-flex align-items-center"><svg width="14" height="15" viewBox="0 0 14 15"><path d="M2 1h8l3 3v10H2z" fill="#555" stroke="#ddd"/><path d="M4 6h7M4 9h7M4 12h7" stroke="#ddd"/><rect width="5" height="5" fill="#f5a623"/></svg>新建<span class="caret-s ms-1"></span></div>
                <div class="ct-item d-flex align-items-center"><svg width="13" height="15" viewBox="0 0 13 15"><path d="M1 1h8l3 3v10H1z" fill="#55708f" stroke="#7fa8d8"/><path d="M3 7h7M3 10h7" stroke="#cfe0f5"/></svg>复制</div>
                <div class="ct-item d-flex align-items-center"><svg width="15" height="15" viewBox="0 0 15 15"><path d="M1 1h7l3 3v8H1z" fill="none" stroke="#aaa"/><rect x="8" y="8" width="7" height="7" fill="#d9534f"/><path d="M9.500 9.500l4 4M13.500 9.500l-4 4" stroke="#fff"/></svg>删除</div>
                <div class="ct-item d-flex align-items-center"><svg width="14" height="15" viewBox="0 0 14 15"><rect x="4" y="1" width="9" height="10" fill="#c8c8c8"/><path d="M1 5v9h9" fill="none" stroke="#4f7fb8" stroke-width="1.500"/></svg>层间复制</div>
                <div class="ct-item d-flex align-items-center"><svg width="16" height="15" viewBox="0 0 16 15"><rect x=".5" y=".5" width="15" height="12" fill="#666" stroke="#4f9be6"/><path d="M1 3h14" stroke="#4f9be6" stroke-width="3"/><rect x="9" y="8" width="6" height="7" fill="#f08a24"/></svg>存档</div>
                <div class="ct-item d-flex align-items-center"><svg width="15" height="15" viewBox="0 0 15 15"><rect x=".5" y="1.500" width="13" height="13" fill="#666" stroke="#4f9be6"/><path d="M1 4h13" stroke="#4f9be6" stroke-width="2"/><path d="M13 4l2 2-7 7-3 1 1-3z" fill="#ddd"/></svg>提取</div>
                <span class="ms-auto me-2 text-secondary small">»</span>
            </div>
            <div class="comp-search d-flex align-items-center justify-content-between">搜索构件...<svg width="13" height="13"><use href="#ic-search"/></svg></div>
            <div class="comp-list">
                <div class="cl-row cl-root d-flex align-items-center"><span class="cl-tri"></span>剪力墙</div>
                <div class="cl-row d-flex align-items-center">JLQ-下 [外墙]</div>
                <div class="cl-row d-flex align-items-center">JLQ-2 [外墙]</div>
                <div class="cl-row cl-sel d-flex align-items-center">JLQ-上-1 [外墙]</div>
            </div>
            <div class="pane-strip">×</div>
            <div class="prop-pane">
                <div class="pane-tabs d-flex">
                    <div class="pane-tab pane-tab-on">属性列表</div>
                    <div class="pane-tab">图层管理</div>
                </div>
                <div class="prop-wrap d-flex">
                    <table class="table prop-tbl">
                        <colgroup><col class="pc1"><col class="pc2"><col class="pc3"></colgroup>
                        <thead>
                            <tr><th></th><th>属性名称</th><th class="prop-hv">属性值</th></tr>
                        </thead>
                        <tbody id="propRows"></tbody>
                    </table>
                    <div class="prop-scroll flex-grow-1"><div class="scroll-thumb"></div></div>
                </div>
                <div class="prop-foot"><div class="param-btn">参数图</div></div>
            </div>
        </div>
        <div class="pane-gap2"><span class="gap-arrow"></span></div>

        <!-- 3D view + rebar editor -->
        <div class="pane-right">
            <div class="scene-box">
                <svg class="scene-svg" width="1334" height="562" viewBox="586 175 1334 562">
                    <polygon points="586,242 1336,588 1336,737 1075,737 586,507" fill="#222"/>
                    <polygon points="1275,587 1336,587 1352,737 1275,737" fill="#444"/>
                    <g id="stirrups" stroke="#9b908b" stroke-width="1"></g>
                    <path d="M783,348 L1237,560" stroke="#6f655f" stroke-width="5"/>
                    <g stroke="#fff" fill="none">
                        <path d="M783,343 L1247,558" stroke-width="1.500"/>
                        <path d="M783,352 L1227,561" stroke-width="2"/>
                        <path d="M783,317 L1147,480" stroke-width="1.500"/>
                        <path d="M1147,480 L1340,585" stroke-width="1.500"/>
                        <path d="M1227,561 L1361,556 L1361,583 L1304,587 L1227,561" stroke-width="2"/>
                    </g>
                    <path d="M783,287 L1361,556" stroke="#7ff" stroke-width="1.800"/>
                    <path d="M1147,480 L1346,578" stroke="#1cc" stroke-width="1"/>
                    <g stroke="#6a0d7a" stroke-width="2" fill="none">
                        <path d="M783,310 L1147,480"/>
                        <path d="M1011,443 L1100,472 L1147,480"/>
                        <path d="M1116,441 L1147,480"/>
                    </g>
                    <g stroke="#bbb" stroke-width="1" fill="none">
                        <path d="M586,557 L1920,532"/>
                        <path d="M586,585 L1920,559"/>
                        <path d="M689,682 L1920,658"/>
                        <path d="M717,699 L945,695"/>
                        <path d="M963,713 L1920,695"/>
                        <path d="M1002,731 L1920,709"/>
                        <path d="M586,721 L635,720"/>
                        <path d="M654,719 L757,717"/>
                        <path d="M928,696 L963,713"/>
                        <path d="M1002,732 L1012,737"/>
                    </g>
                    <g stroke="#fff" stroke-width="1" fill="none">
                        <path d="M645,639 L732,696"/>
                        <path d="M670,666 L816,737"/>
                        <path d="M830,635 L916,692"/>
                        <path d="M654,719 L690,737"/>
                        <path d="M670,666 L705,664 L710,669"/>
                        <path d="M858,664 L895,662 L900,667"/>
                    </g>
                    <g stroke="#fff" stroke-width="1.500" stroke-dasharray="7 2 3 3" fill="none">
                        <path d="M660,642 L690,655"/>
                        <path d="M668,647 L705,662"/>
                        <path d="M690,656 L745,668"/>
                        <path d="M846,638 L880,652"/>
                        <path d="M856,644 L895,658"/>
                        <path d="M878,652 L930,665"/>
                        <path d="M656,718 L690,730"/>
                        <path d="M668,723 L724,737"/>
                        <path d="M753,679 L830,677"/>
                        <path d="M1360,670 L1640,665"/>
                    </g>
                    <text x="923" y="381" font-size="11" fill="#ddd" font-family="Liberation Sans">38459</text>
                    <text x="1345" y="580" font-size="11" fill="#fff" font-family="Liberation Sans">120</text>
                    <path d="M636,684 V668" stroke="#0000ff" stroke-width="3"/>
                    <path d="M631,669 L636,657 L641,669z" fill="#0000ff"/>
                    <path d="M640,686 H655" stroke="#00dd00" stroke-width="4"/>
                    <path d="M654,680 L665,686 L654,692z" fill="#00dd00"/>
                    <rect x="633" y="683" width="6" height="8" fill="#888"/>
                    <ellipse cx="640" cy="687" rx="5" ry="6" fill="#d00000"/>
                    <text x="632" y="655" font-size="14" fill="#0000ff" font-family="Liberation Sans">Z</text>
                    <text x="667" y="692" font-size="14" fill="#00dd00" font-family="Liberation Sans">Y</text>
                </svg>

                <div class="ctl-panel">
                    <div class="ctl-head">钢筋显示控制面板</div>
                    <div class="ctl-inner">
                        <label class="ctl-row d-flex align-items-center"><input class="form-check-input ctl-chk" type="checkbox" checked>剪力墙水平筋</label>
                        <label class="ctl-row d-flex align-items-center"><input class="form-check-input ctl-chk" type="checkbox" checked>剪力墙垂直筋</label>
                        <label class="ctl-row d-flex align-items-center"><input class="form-check-input ctl-chk" type="checkbox">下层墙体纵筋的露出长度</label>
                        <label class="ctl-row d-flex align-items-center"><input class="form-check-input ctl-chk" type="checkbox">显示其它图元</label>
                        <label class="ctl-row d-flex align-items-center"><input class="form-check-input ctl-chk" type="checkbox">显示详细公式</label>
                    </div>
                </div>

                <div class="view-bar">
                    <svg class="vb-first" width="24" height="22" viewBox="0 0 24 22"><circle cx="12" cy="11" r="9" fill="#c4c7cc"/><path d="M12 2a9 9 0 0 0-9 9c4 4 12 2 16-4a9 9 0 0 0-7-5z" fill="#eceef0"/><path d="M1 17c6 1 16-4 22-12" fill="none" stroke="#4b5561" stroke-width="1.500"/><circle cx="19" cy="7" r="4" fill="#b8bcc2"/></svg>
                    <svg width="24" height="24" viewBox="0 0 24 24"><rect x=".5" y=".5" width="23" height="23" fill="#8492a6" stroke="#333c48"/><text x="12" y="21" font-size="9" fill="#222" font-family="Liberation Sans">2D</text></svg>
                    <svg width="24" height="24" viewBox="0 0 24 24"><path d="M.5 6L6 .5h17.500V18L18 23.500H.5z" fill="#d2e6ff" stroke="#333c48"/><path d="M.5 6H18v17.500M18 6l5.500-5.500M6 .5V18H23.500M6 18L.5 23.500" fill="none" stroke="#333c48"/></svg>
                    <div class="vb-tri"></div>
                    <svg width="24" height="24" viewBox="0 0 24 24"><path d="M.5 6L6 .5h17.500V18L18 23.500H.5z" fill="#8492a6" stroke="#333c48"/><path d="M.5 6H18v17.500M18 6l5.500-5.500" fill="none" stroke="#333c48"/></svg>
                    <div class="vb-tri"></div>
                    <svg width="24" height="24" viewBox="0 0 24 24"><path d="M19 6A10 10 0 1 0 22 13" fill="none" stroke="#333c48" stroke-width="2"/><path d="M17 1l6 0-1 7z" fill="#333c48"/></svg>
                    <div class="vb-tri"></div>
                    <div class="vb-line"></div>
                    <svg width="24" height="24" viewBox="0 0 24 24"><rect x=".5" y=".5" width="23" height="23" fill="#8492a6" stroke="#333c48"/><path d="M1 4h22M12 6v16" stroke="#333c48"/><path d="M4 8h3v3H4zM4 13h3v3H4zM4 18h3v3H4zM15 8h3v3h-3zM15 13h3v3h-3zM15 18h3v3h-3z" fill="none" stroke="#333c48"/></svg>
                </div>
            </div>
            <div class="scene-sash"><span class="sash-tri"></span></div>

            <div class="edit-strip">×</div>
            <div class="edit-head">编辑钢筋</div>
            <div class="edit-body">
                <div class="edit-box">
                    <div class="edit-tools d-flex align-items-center">
                        <span class="et-nav">|&lt;</span><span class="et-nav">&lt;</span><span class="et-nav">&gt;</span><span class="et-nav et-nav-end">&gt;|</span>
                        <svg class="et-arrow" width="14" height="16" viewBox="0 0 14 16"><rect x=".5" y=".5" width="13" height="15" fill="#666" stroke="#aaa"/><path d="M7 13V4M3 8l4-4 4 4" fill="none" stroke="#ddd" stroke-width="2"/></svg>
                        <svg class="et-arrow" width="14" height="16" viewBox="0 0 14 16"><rect x=".5" y=".5" width="13" height="15" fill="#666" stroke="#aaa"/><path d="M7 3v9M3 8l4 4 4-4" fill="none" stroke="#3d8fe0" stroke-width="2"/></svg>
                        <div class="et-item d-flex align-items-center"><svg width="14" height="14" viewBox="0 0 14 14"><path d="M1 1h3M1 6h3M1 11h3" stroke="#f08a24" stroke-width="2"/><path d="M13 6H6M8 4L6 6l2 2" fill="none" stroke="#ddd" stroke-width="1.500"/></svg>插入</div>
                        <div class="et-item d-flex align-items-center"><svg width="15" height="16" viewBox="0 0 15 16"><path d="M1 1h7l3 3v9H1z" fill="none" stroke="#ccc"/><rect x="8" y="9" width="7" height="7" fill="#d9534f"/><path d="M9.500 10.500l4 4M13.500 10.500l-4 4" stroke="#fff"/></svg>删除</div>
                        <div class="et-item d-flex align-items-center"><svg width="14" height="16" viewBox="0 0 14 16"><path d="M1 2h8" stroke="#f08a24"/><path d="M2 6v9M5 8v7M8 10v5M11 12v3" stroke="#8aa" stroke-width="1.500"/></svg>缩尺配筋</div>
                        <div class="et-item d-flex align-items-center"><svg width="14" height="16" viewBox="0 0 14 16"><path d="M1 1h8l4 4v10H1z" fill="none" stroke="#4f9be6"/><path d="M4 8h6M4 11h6" stroke="#4f9be6"/></svg>钢筋信息</div>
                        <div class="et-item d-flex align-items-center"><svg width="15" height="14" viewBox="0 0 15 14"><rect x=".5" y=".5" width="14" height="13" fill="#555" stroke="#4f9be6"/><path d="M1 3h13" stroke="#4f9be6" stroke-width="2"/><path d="M3 7h6M3 10h9" stroke="#ddd"/></svg>钢筋图库</div>
                        <div class="et-item d-flex align-items-center"><svg width="14" height="16" viewBox="0 0 14 16"><path d="M1 1h8l4 4v10H1z" fill="none" stroke="#4f9be6"/><circle cx="8" cy="11" r="3" fill="#f08a24"/></svg>其他<span class="caret-s ms-1"></span></div>
                        <span>单构件钢筋总重(kg): 214.132</span>
                    </div>
                    <div class="grid-row d-flex">
                        <div class="grid-clip">
                            <table class="table rebar-tbl">
                                <colgroup id="rebarCols"></colgroup>
                                <thead>
                                    <tr>
                                        <th class="grid-no"></th><th class="grid-key">筋号</th><th>直径(mm)</th><th>级别</th><th>图号</th><th>图形</th><th>计算公式</th><th>公式描述</th><th>长度</th><th>根数</th><th>搭接</th><th>损耗(%)</th><th>单重(kg)</th><th>总重(kg)</th><th>钢筋归类</th><th>搭接形式</th><th>钢筋类型</th><th class="grid-fill"></th>
                                    </tr>
                                </thead>
                                <tbody>
                                    <tr>
                                        <td class="grid-no">1</td><td class="grid-focus">墙身水平钢筋.1</td><td class="grid-num">12</td><td><span class="grade-u">中</span></td><td class="grid-num">64</td>
                                        <td class="grid-pic"><svg width="216" height="46" viewBox="0 0 216 46"><text class="shape-t" x="17" y="26" fill="#111">180</text><path d="M41,15 V31 H190 V15" fill="none" stroke="#111" stroke-width="2"/><text class="shape-t" x="100" y="26" fill="#e00000">38459</text><text class="shape-t" x="195" y="27" fill="#111">120</text></svg></td>
                                        <td class="grid-num">36861+1628-15+15*d-15+10*d</td><td>净长+支座宽-保…</td><td class="grid-num">38759</td><td class="grid-num">2</td><td class="grid-num">2112</td><td class="grid-num">0</td><td class="grid-num">36.293</td><td class="grid-num">72.586</td><td>直筋</td><td>绑扎</td><td>普通钢筋</td><td class="grid-fill"></td>
                                    </tr>
                                    <tr>
                                        <td class="grid-no">2</td><td>墙身水平钢筋.2</td><td class="grid-num">12</td><td><span class="grade-u">中</span></td><td class="grid-num">64</td>
                                        <td class="grid-pic"><svg width="216" height="46" viewBox="0 0 216 46"><text class="shape-t" x="17" y="26" fill="#111">355</text><path d="M41,15 V31 H190 V15" fill="none" stroke="#111" stroke-width="2"/><text class="shape-t" x="100" y="26" fill="#e00000">38459</text><text class="shape-t" x="195" y="27" fill="#111">120</text></svg></td>
                                        <td class="grid-num">38489-15+1.6*37*d/ 2-15+10*d</td><td>外皮长度-保护层…</td><td class="grid-num">38934</td><td class="grid-num">2</td><td class="grid-num">2112</td><td class="grid-num">0</td><td class="grid-num">36.449</td><td class="grid-num">72.898</td><td>直筋</td><td>绑扎</td><td>普通钢筋</td><td class="grid-fill"></td>
                                    </tr>
                                    <tr>
                                        <td class="grid-no">3</td><td>墙身垂直钢筋.1</td><td class="grid-num">12</td><td><span class="grade-u">中</span></td><td class="grid-num">18</td>
                                        <td class="grid-pic"><svg width="216" height="46" viewBox="0 0 216 46"><text class="shape-t" x="17" y="29" fill="#111">120</text><path d="M44,15 V32 H212" fill="none" stroke="#111" stroke-width="2"/><text class="shape-t" x="111" y="24" fill="#e00000">231</text></svg></td>
                                        <td class="grid-num">246-15+10*d</td><td>墙实际高度-保…</td><td class="grid-num">351</td><td class="grid-num">194</td><td class="grid-num">0</td><td class="grid-num">0</td><td class="grid-num">0.312</td><td class="grid-num">60.528</td><td>直筋</td><td>绑扎</td><td>普通钢筋</td><td class="grid-fill"></td>
                                    </tr>
                                    <tr>
                                        <td class="grid-no">4</td><td>墙身拉筋.1</td><td class="grid-num">6</td><td><span class="grade-n">中</span></td><td class="grid-num">485</td>
                                        <td class="grid-pic"><svg width="216" height="46" viewBox="0 0 216 46"><path d="M37,38 L19,15 L17,9 H212 V15 L192,38" fill="none" stroke="#111" stroke-width="2"/><text x="93" y="28" font-size="15" fill="#111" font-family="Liberation Mono" letter-spacing="-1">1223</text></svg></td>
                                        <td class="grid-num">(1253-2*15)+2*(5*d+1.9*d)</td><td></td><td class="grid-num">1306</td><td class="grid-num">28</td><td class="grid-num">0</td><td class="grid-num">0</td><td class="grid-num">0.29</td><td class="grid-num">8.12</td><td>箍筋</td><td>绑扎</td><td>普通钢筋</td><td class="grid-fill"></td>
                                    </tr>
                                </tbody>
                            </table>
                        </div>
                        <div class="grid-scroll"><div class="grid-thumb"></div></div>
                    </div>
                </div>

                <!-- floating net speed widget -->
                <div class="net-float">
                    <svg class="net-crown" width="22" height="24" viewBox="0 0 22 24"><path d="M2 16L1 6l5 4 4-9 4 9 5-3-1 9z" fill="#f5c542"/><path d="M2 15l18-2 1 8-18 3z" fill="#d9952a"/><text x="5" y="22" font-size="7" font-weight="700" fill="#5a2d00" font-family="Liberation Sans">VIP</text></svg>
                    <div class="net-pill">
                        <div class="net-line d-flex justify-content-between align-items-center"><span class="net-up">↑</span><span>0 K/s</span></div>
                        <div class="net-line d-flex justify-content-between align-items-center"><span class="net-down">↓</span><span>9.7 K/s</span></div>
                    </div>
                    <div class="net-ball">85<small>%</small></div>
                </div>
            </div>
        </div>
    </div>

    <!-- status bar -->
    <div class="status-bar d-flex align-items-center">
        <div class="st-coord">X = -1696 Y = 24832 Z = -3050</div>
        <div class="st-a">层高:&nbsp;&nbsp;3</div>
        <div class="st-b">标高:&nbsp;&nbsp;<span class="st-num">-3.05~-0.05</span></div>
        <div class="st-c">1(2)</div>
        <div class="st-d">隐藏:&nbsp;8</div>
        <div class="st-btn st-w25 d-flex align-items-center"><svg width="14" height="16" viewBox="0 0 14 16"><path d="M1 1v13h12M1 9h5v5" fill="none" stroke="#ccc"/></svg></div>
        <div class="st-btn st-w36 st-on d-flex align-items-center gap-1"><svg width="16" height="18" viewBox="0 0 16 18"><rect x="2" y="4" width="12" height="13" fill="none" stroke="#5aa9ee" stroke-width="1.300"/><rect width="5" height="5" fill="#f59a4a"/></svg><span class="caret-s"></span></div>
        <div class="st-btn st-w25 st-tight d-flex align-items-center"><svg width="14" height="16" viewBox="0 0 14 16"><path d="M1 1l12 14M13 1L1 15" stroke="#666"/></svg></div>
        <div class="st-btn st-w36 st-tight d-flex align-items-center gap-1"><svg width="16" height="14" viewBox="0 0 16 14"><path d="M1 13h14M2 12L11 2M4 5l6 6" stroke="#ccc" fill="none"/></svg><span class="caret-s"></span></div>
        <div class="st-btn st-w36 d-flex align-items-center gap-1"><svg width="16" height="16" viewBox="0 0 16 16"><path d="M3 1v6M0 4h6" stroke="#ddd"/><rect x="6" y="10" width="9" height="5" fill="#bbb"/></svg><span class="caret-s"></span></div>
        <div class="st-btn d-flex align-items-center">跨图层选择</div>
        <div class="st-btn d-flex align-items-center">折线选择</div>
        <div class="st-fps">55.5556 FPS</div>
    </div>
</div>
<div class="side-strip"><div class="side-pic"></div></div>
</div>

<script>
    // 属性列表
    var props = [
        [24, '保护层厚...', '(15)'], [25, '汇总信息', '(剪力墙)'], [26, '压墙筋', ''], [27, '纵筋构造', '设置插筋'],
        [28, '插筋信息', ''], [29, '水平钢筋...', '否'], [30, '抗震等级', '(一级抗震)'], [31, '锚固搭接', '按默认锚固搭接计算'],
        [32, '计算设置', '按默认计算设置计算'], [33, '节点设置', '按默认节点设置计算'], [34, '搭接设置', '按默认搭接设置计算'],
        [35, '土建业务属性', '', 1], [43, '显示样式', '', 1]
    ];
    document.getElementById('propRows').innerHTML = props.map(function (p) {
        var cur = p[0] === 32;
        var head = p[3] ? '<span class="plus-box">+</span>' : '<span class="tree-tick"></span>';
        return '<tr><td class="prop-no' + (cur ? ' prop-no-on' : '') + '">' + p[0] + '</td>' +
            '<td><div class="prop-name d-flex align-items-center' + (p[3] ? ' ps-0' : '') + '">' + head + p[1] + '</div></td>' +
            '<td class="prop-v' + (cur ? ' prop-focus' : '') + '">' + p[2] + '</td></tr>';
    }).join('');
    var pw = [21, 101, 228];
    document.querySelectorAll('.prop-tbl col').forEach(function (c, i) { c.style.width = pw[i] + 'px'; });

    // 钢筋表列宽
    var cw = [6, 73, 57, 35, 33, 216, 166, 61, 38, 39, 49, 62, 61, 71, 73, 71, 157, 32];
    document.getElementById('rebarCols').innerHTML = cw.map(function (w) {
        return '<col style="width:' + w + 'px">';
    }).join('');

    // 三维视图里的箍筋
    var g = document.getElementById('stirrups');
    for (var x = 757; x < 1228; x += 3.4) {
        var y0 = 352 + (x - 783) * 0.4707;
        var l = document.createElementNS('http://www.w3.org/2000/svg', 'line');
        l.setAttribute('x1', x); l.setAttribute('x2', x);
        l.setAttribute('y1', y0); l.setAttribute('y2', y0 + 30);
        g.appendChild(l);
    }
</script>
<script src="https://cdn.jsdelivr.net/npm/bootstrap@5.3.0/dist/js/bootstrap.bundle.min.js"></script>
</body>
</html>
